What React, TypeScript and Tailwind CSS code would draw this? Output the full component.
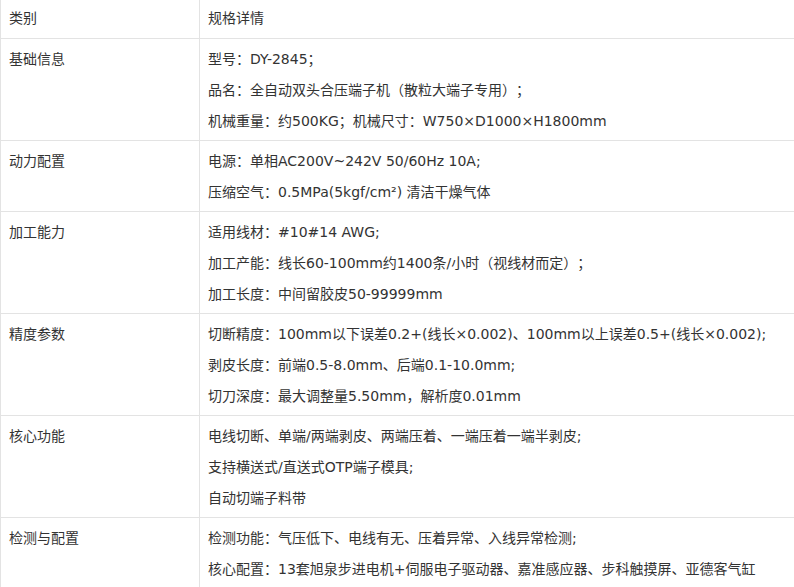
const rows: { label: string; lines: string[] }[] = [
  {
    label: "基础信息",
    lines: [
      "型号：DY-2845；",
      "品名：全自动双头合压端子机（散粒大端子专用）；",
      "机械重量：约500KG；机械尺寸：W750×D1000×H1800mm",
    ],
  },
  {
    label: "动力配置",
    lines: ["电源：单相AC200V~242V 50/60Hz 10A;", "压缩空气：0.5MPa(5kgf/cm²) 清洁干燥气体"],
  },
  {
    label: "加工能力",
    lines: [
      "适用线材：#10#14 AWG;",
      "加工产能：线长60-100mm约1400条/小时（视线材而定）；",
      "加工长度：中间留胶皮50-99999mm",
    ],
  },
  {
    label: "精度参数",
    lines: [
      "切断精度：100mm以下误差0.2+(线长×0.002)、100mm以上误差0.5+(线长×0.002);",
      "剥皮长度：前端0.5-8.0mm、后端0.1-10.0mm;",
      "切刀深度：最大调整量5.50mm，解析度0.01mm",
    ],
  },
  {
    label: "核心功能",
    lines: ["电线切断、单端/两端剥皮、两端压着、一端压着一端半剥皮;", "支持横送式/直送式OTP端子模具;", "自动切端子料带"],
  },
  {
    label: "检测与配置",
    lines: [
      "检测功能：气压低下、电线有无、压着异常、入线异常检测;",
      "核心配置：13套旭泉步进电机+伺服电子驱动器、嘉准感应器、步科触摸屏、亚德客气缸",
    ],
  },
]

export default function App() {
  return (
    <div className="h-[587px] overflow-hidden bg-white font-['DejaVu_Sans','Noto_Sans_CJK_SC',sans-serif] text-[14px] text-[#333] [text-spacing-trim:space-all]">
      <table className="w-[820px] border-collapse">
        <tbody>
          <tr>
            <td className="w-[199px] border-l border-b border-r border-[#e3e3e3] px-2 pt-2 pb-[9px] align-top leading-[21px]">类别</td>
            <td className="border-b border-r border-[#e3e3e3] px-2 pt-2 pb-[9px] align-top leading-[21px]">规格详情</td>
          </tr>
          {rows.map((row) => (
            <tr key={row.label}>
              <td className="border border-t-0 border-[#e3e3e3] px-2 pt-[10px] pb-2 align-top leading-[21px]">{row.label}</td>
              <td className="border border-t-0 border-l-0 border-[#e3e3e3] px-2 pt-[10px] pb-2 align-top">
                <div className="flex flex-col gap-[10px]">
                  {row.lines.map((line) => (
                    <p key={line} className="leading-[21px] whitespace-nowrap">{line}</p>
                  ))}
                </div>
              </td>
            </tr>
          ))}
        </tbody>
      </table>
    </div>
  )
}
